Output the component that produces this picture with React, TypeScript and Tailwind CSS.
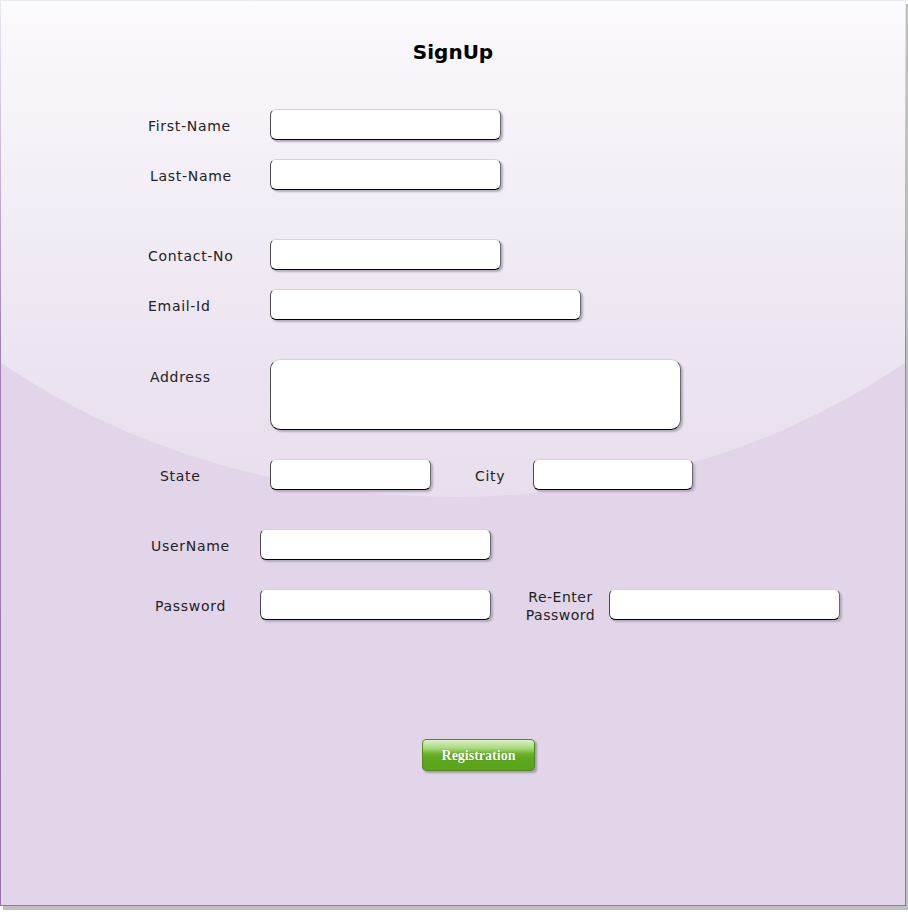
import React from 'react'

const inputCls =
  'h-[31px] rounded-[6px] bg-white border border-t-[#d6d3d8] border-l-[#4a4a4a] border-r-[#6a6a6a] border-b-black shadow-[2px_2px_2px_#b3abb9] outline-none'

function Field({ w }: { w: string }) {
  return <input type="text" className={`${inputCls} ${w}`} />
}

export default function App() {
  return (
    <div className="w-[908px] min-h-[914px] bg-white font-['DejaVu_Sans',Verdana,sans-serif] text-[14px] text-[#222] tracking-[0.7px]">
      <div className="w-[906px] h-[906px] p-px bg-[linear-gradient(to_bottom,#ebe8ef_0%,#a47fc0_38%,#9870b2_100%)] shadow-[3px_4px_0_#bfbfbf]">
        <div className="relative h-full w-full overflow-hidden bg-[#e2d5e9]">
          {/* glossy highlight */}
          <div className="absolute left-[-248px] top-[-640px] w-[1400px] h-[1136px] rounded-[50%] bg-[linear-gradient(to_bottom,#ffffff_0%,#fbfafd_56%,#ede5f1_86%,#e8deed_100%)]" />

          <div className="relative flex flex-col">
            <h1 className="pt-[39px] text-center text-[20px] leading-[24px] font-bold tracking-normal text-black">
              SignUp
            </h1>

            <div className="pl-[147px] flex flex-col">
              <div className="mt-[45px] h-[31px] flex items-center">
                <span className="w-[122px] pt-[3px]">First-Name</span>
                <Field w="w-[231px]" />
              </div>
              <div className="mt-[19px] h-[31px] flex items-center">
                <span className="w-[122px] pl-[2px] pt-[3px]">Last-Name</span>
                <Field w="w-[231px]" />
              </div>
              <div className="mt-[49px] h-[31px] flex items-center">
                <span className="w-[122px] pt-[3px]">Contact-No</span>
                <Field w="w-[231px]" />
              </div>
              <div className="mt-[19px] h-[31px] flex items-center">
                <span className="w-[122px] pt-[3px]">Email-Id</span>
                <Field w="w-[311px]" />
              </div>
              <div className="mt-[39px] flex items-start">
                <span className="w-[122px] pl-[2px] pt-[8px]">Address</span>
                <textarea className={`${inputCls} w-[411px] h-[71px] rounded-[10px] resize-none`} />
              </div>
              <div className="mt-[29px] h-[31px] flex items-center">
                <span className="w-[122px] pl-[12px] pt-[3px]">State</span>
                <Field w="w-[161px]" />
                <span className="ml-[44px] w-[58px] pt-[3px]">City</span>
                <Field w="w-[160px]" />
              </div>
              <div className="mt-[39px] h-[31px] flex items-center">
                <span className="w-[112px] pl-[3px] pt-[3px]">UserName</span>
                <Field w="w-[231px]" />
              </div>
              <div className="mt-[29px] h-[31px] flex items-center">
                <span className="w-[112px] pl-[7px] pt-[3px]">Password</span>
                <Field w="w-[231px]" />
                <span className="ml-[33px] w-[73px] pt-[2px] text-center leading-[18px] tracking-[0.5px]">
                  Re-Enter
                  <br />
                  Password
                </span>
                <div className="ml-[12px] flex">
                  <Field w="w-[231px]" />
                </div>
              </div>
            </div>

            <div className="mt-[119px] flex pl-[421px]">
              <button className="w-[113px] h-[32px] rounded-[4px] border border-[#4d8d1c] bg-[linear-gradient(to_bottom,#dcf2c8_0%,#a6d87a_28%,#6cb22c_46%,#5ea81e_60%,#5aa31b_100%)] shadow-[2px_2px_2px_#a69aac] font-['Liberation_Serif','Times_New_Roman',serif] text-[14px] font-bold tracking-normal text-white [text-shadow:0_0_1px_#3d6f12]">
                Registration
              </button>
            </div>
          </div>
        </div>
      </div>
    </div>
  )
}
